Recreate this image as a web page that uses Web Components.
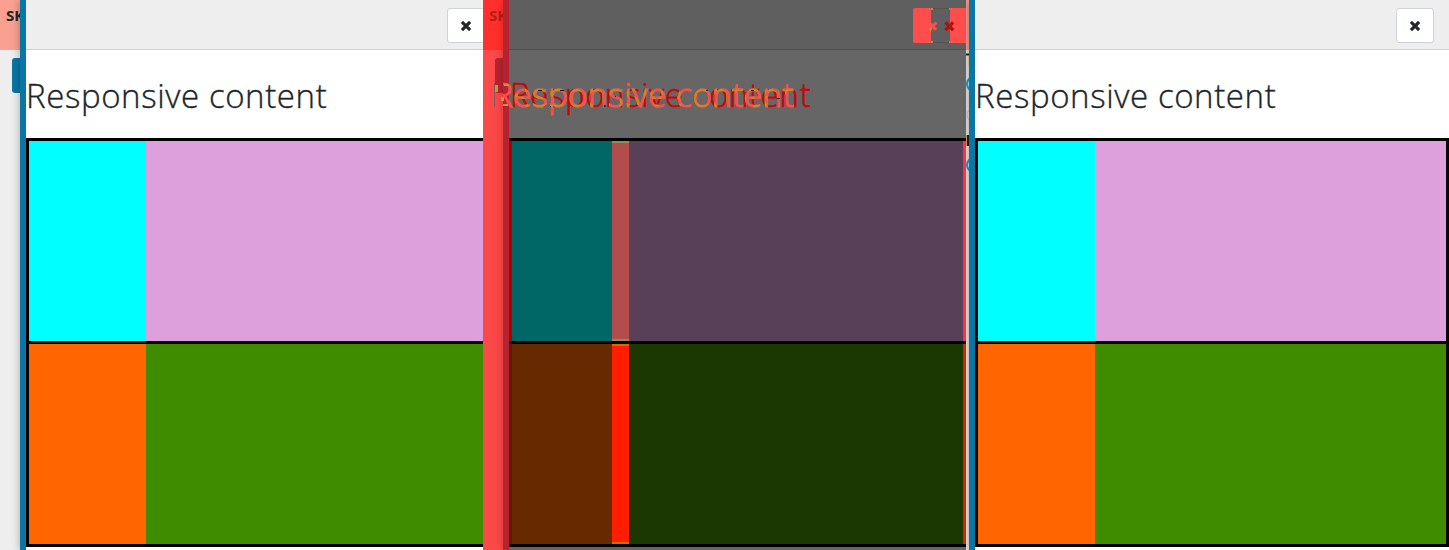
<!DOCTYPE html>
<html lang="en"><head><meta charset="utf-8"><title>Responsive content</title>
<style>body{margin:0;overflow:hidden;background:#fff}</style></head><body>
<compare-view></compare-view>
<script>
const make=(name,html)=>customElements.define(name,class extends HTMLElement{
 constructor(){super();this.attachShadow({mode:'open'}).innerHTML=html;}
});
make('close-button',`<style>
:host{display:block;box-sizing:border-box;width:38px;height:35px;flex:none;background:#fff;border:1px solid #ced4da;border-radius:3px}
svg{display:block;width:100%;height:100%}
</style><svg viewBox="0 0 36 33"><path d="M14.7 13.7 21.3 20.3M21.3 13.7 14.7 20.3" stroke="#212529" stroke-width="3.5" stroke-linecap="square" fill="none" transform="translate(18 17) scale(.9) translate(-18 -17)"/></svg>`);
make('diff-button',`<style>
:host{display:block;width:53px;height:35px;flex:none}
svg{display:block}
</style><svg width="53" height="35" viewBox="0 0 53 35" fill="none">
<path d="M18 0H2Q0 0 0 2V33Q0 35 2 35H18ZM37 0H53V35H37Z" fill="#ff4c4c"/>
<path d="M18 .5H37M18 34.5H37" stroke="#535353"/>
<path d="M16 1H20M36 1H39M16 34H20M36 34H39" stroke="#c88a3c" stroke-width="2"/>
<path d="M17.5 0V35M37.5 0V35" stroke="#a07040" stroke-dasharray="2 31"/>
<path d="M17.2 15.5 22 20.8M22.5 15.5 17 21" stroke="#ff4c4c" stroke-width="3" stroke-linecap="square"/>
<path d="M16.5 15V17M17.5 19.500V23.500M16 21H19" stroke="#c88a3c" stroke-width="1.500"/>
<path d="M33.500 15.500 39 21M39 15.500 33.500 21" stroke="#b80c0c" stroke-width="3.200" stroke-linecap="square"/>
<path d="M37 15V22" stroke="#7d4a16" stroke-width="1" stroke-dasharray="2 1"/>
</svg>`);
make('content-grid',`<style>
:host{display:block;border:solid #000;border-width:3px 0}
div{display:flex;height:200px}
div+div{border-top:3px solid #000}
.l,.r{width:3px;flex:none;background:var(--edge,#000)}
.r{background:var(--redge,#000)}
.a{flex:none;width:var(--first,117px)}
.s{flex:none;box-sizing:border-box;width:var(--gap,0)}
.s.u{background:#b34c4c;border:solid #8f8f4c;border-width:2px 0}
.s.v{background:#ff1f00;border:solid #d96600;border-width:2px 0}
.b{flex:1}
</style><div><i class="l"></i><i class="a" style="background:var(--c1,#0ff)"></i><i class="s u"></i><i class="b" style="background:var(--c2,#dda0dd)"></i><i class="r"></i></div>
<div><i class="l" style="background:var(--edge2,#000)"></i><i class="a" style="background:var(--c3,#f60)"></i><i class="s v"></i><i class="b" style="background:var(--c4,#3f8c00)"></i><i class="r" style="background:var(--redge2,#000)"></i></div>`);
make('page-title',`<style>
:host{display:block;box-sizing:border-box;height:88px;padding-top:2px;font:300 33px/88px "Open Sans","Noto Sans",sans-serif;letter-spacing:.6px;-webkit-text-stroke:.35px #212529;white-space:nowrap;color:#212529}
</style><slot></slot>`);
make('diff-title',`<style>
:host{display:block;position:relative;box-sizing:border-box;height:88px;font:300 33px/89px "Open Sans","Noto Sans",sans-serif;letter-spacing:.6px;white-space:nowrap}
svg{display:block;position:absolute;left:-26px;top:0;overflow:visible}
</style><svg width="360" height="88">
<defs><mask id="k" maskUnits="userSpaceOnUse" x="20" y="0" width="340" height="88"><text x="10" y="57" fill="#fff" stroke="#fff" stroke-width="1.500">Responsive content</text></mask>
<clipPath id="c"><path d="M20 0h340v88H20z"/></clipPath></defs>
<path d="M11.500 33v24" stroke="#8b5656"/>
<g clip-path="url(#c)"><text x="10" y="57" fill="#ff4c4c" stroke="#ff4c4c" stroke-width="1">Responsive content</text></g>
<text x="27" y="57" fill="#c40808" stroke="#c40808" stroke-width=".6">Responsive content</text>
<g mask="url(#k)"><text x="27" y="57" fill="#a85f10" stroke="#c98534" stroke-width="1.600">Responsive content</text></g>
<g fill="#c99345"><path d="M12 35h3v7h-3zM21 34h5v2h-5zM18 47h3v4h-3zM20 54h5v2h-5z"/></g>
<g mask="url(#k)"><g fill="#131313"><path d="M55 40h4v1h-4zM64 56h4v1h-4zM77 40h6v1h-6zM85 56h5v1h-5zM104 45h1v5h-1zM121 55h3v2h-3zM132 42h1v5h-1zM151 55h4v1h-4zM181 40h3v1h-3zM202 47h5v1h-5zM223 40h6v1h-6zM224 56h6v1h-6zM245 40h4v1h-4zM268 40h3v1h-3zM292 48h7v1h-7z"/></g></g>
</svg>`);
make('offcanvas-panel',`<style>
:host{display:flex;flex-direction:column;flex:none;box-sizing:border-box;width:var(--w);border-left:6px solid var(--bar,#0a76a4);background:var(--body,#fff);box-shadow:var(--shade,0 0 8px rgba(0,0,0,.3));position:relative}
header{display:flex;justify-content:flex-end;box-sizing:border-box;height:50px;padding:8px var(--pad,15px) 0 0;background:var(--head,#eee);border-bottom:1px solid var(--rule,#ced0d2)}
</style><header><slot name="close"></slot></header><slot></slot>`);
make('back-strip',`<style>
:host{display:block;flex:none;width:20px;background:var(--strip,#eee)}
.t{height:50px;box-sizing:border-box;padding:6px 0 0 6px;background:var(--top,#f9a091);color:var(--tc,#212529);font:700 15px/18px "Noto Sans",sans-serif;white-space:nowrap}
.b{height:35px;margin:8px 0 0 12px;background:var(--button,#0a76a4);border-radius:3px 0 0 3px}
</style><div class="t"><slot></slot></div><div class="b"></div>`);
make('edge-strip',`<style>
:host{display:block;flex:none;width:3px;background:#e5e3e0}
svg{display:block}
</style><svg width="3" height="550" viewBox="0 0 3 550" fill="none">
<path d="M0 0h3v50H0z" fill="#f39a8c"/><path d="M0 54.500h3" stroke="#34230f" stroke-width="2"/><path d="M2 56h1v10H2z" fill="#e3dc9d"/>
<circle cx="8" cy="84" r="7" stroke="#149fd3" stroke-width="2"/><circle cx="8" cy="115" r="7" stroke="#c2c2c2"/>
<path d="M1 135h2v11H1z" fill="#251a29"/><path d="M0 135h1v11H0z" fill="#d99a5d"/>
<circle cx="8" cy="165" r="7" stroke="#149fd3" stroke-width="2"/></svg>`);
make('compare-view',`<style>
:host{display:grid;grid-template-columns:repeat(3,483px);height:550px}
section{display:flex;overflow:hidden;min-width:0;height:550px}
.one,.three{--w:480px}
.two{--w:463px;--pad:0;--strip:#fb4848;--top:#ff302c;--tc:#b81c12;--button:#b32430;--bar:#b32430;--body:#666;--head:#5f5f5f;--rule:#525252;--shade:0 0 8px rgba(110,0,0,.3);--edge:#b00000;--edge2:#66150a;--redge:#ff2f45;--redge2:#cc2900;--first:100px;--gap:17px;--c1:#006666;--c2:#584058;--c3:#662900;--c4:#1a3800}
</style>
<section class="one"><back-strip>SK</back-strip><offcanvas-panel><close-button slot="close"></close-button><page-title>Responsive content</page-title><content-grid></content-grid></offcanvas-panel></section>
<section class="two"><back-strip>SK</back-strip><offcanvas-panel><diff-button slot="close"></diff-button><diff-title></diff-title><content-grid></content-grid></offcanvas-panel></section>
<section class="three"><edge-strip></edge-strip><offcanvas-panel><close-button slot="close"></close-button><page-title>Responsive content</page-title><content-grid></content-grid></offcanvas-panel></section>`);
</script></body></html>
